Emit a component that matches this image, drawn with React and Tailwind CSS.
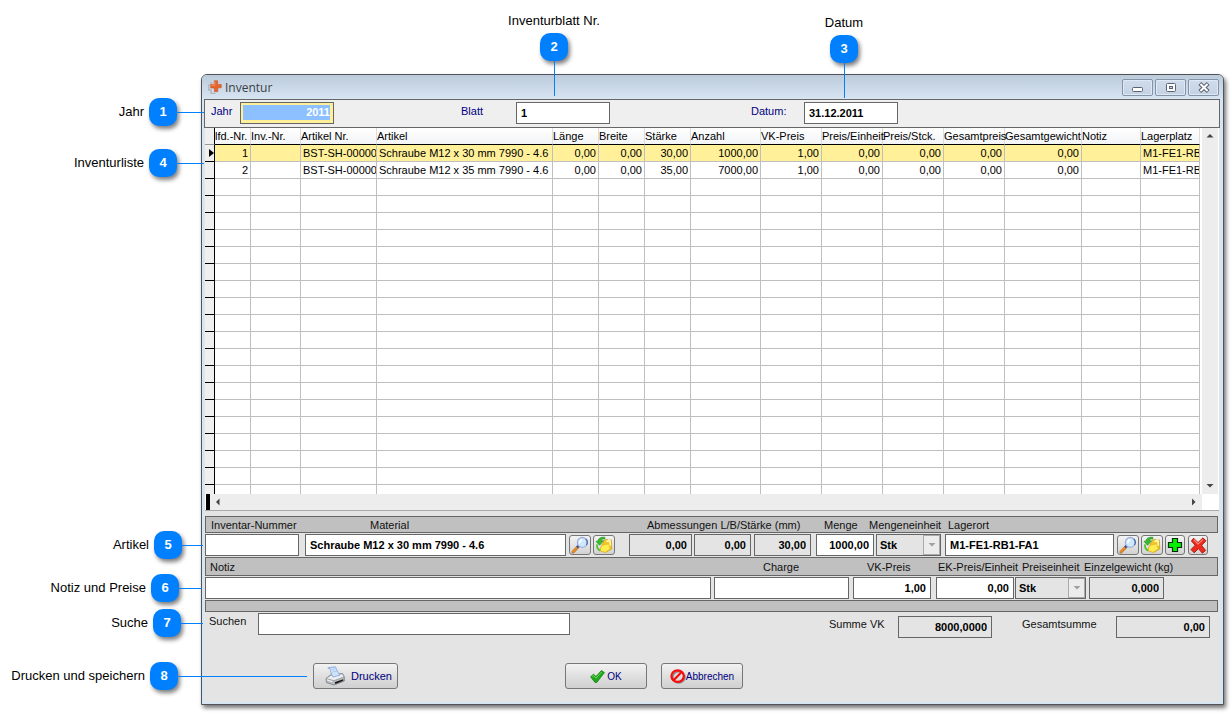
import React from "react";

const FONT = "font-['Liberation_Sans',Arial,sans-serif]";

const COLUMNS = [
  { title: "lfd.-Nr.", width: "w-[36px]", right: true },
  { title: "Inv.-Nr.", width: "w-[50px]" },
  { title: "Artikel Nr.", width: "w-[76px]" },
  { title: "Artikel", width: "w-[176px]" },
  { title: "Länge", width: "w-[46px]", right: true },
  { title: "Breite", width: "w-[46px]", right: true },
  { title: "Stärke", width: "w-[46px]", right: true },
  { title: "Anzahl", width: "w-[70px]", right: true },
  { title: "VK-Preis", width: "w-[61px]", right: true },
  { title: "Preis/Einheit", width: "w-[61px]", right: true },
  { title: "Preis/Stck.", width: "w-[61px]", right: true },
  { title: "Gesamtpreis", width: "w-[61px]", right: true },
  { title: "Gesamtgewicht", width: "w-[77px]", right: true },
  { title: "Notiz", width: "w-[59px]" },
  { title: "Lagerplatz", width: "" },
];

const ROWS = [
  ["1", "", "BST-SH-000002", "Schraube M12 x 30 mm 7990 - 4.6", "0,00", "0,00", "30,00", "1000,00", "1,00", "0,00", "0,00", "0,00", "0,00", "", "M1-FE1-RB1"],
  ["2", "", "BST-SH-000003", "Schraube M12 x 35 mm 7990 - 4.6", "0,00", "0,00", "35,00", "7000,00", "1,00", "0,00", "0,00", "0,00", "0,00", "", "M1-FE1-RB1"],
];

const EMPTY_ROWS = Array.from({ length: 19 }, (_, i) => i);

function AppIcon() {
  return (
    <svg width="14" height="14" viewBox="0 0 14 14" aria-hidden="true">
      <path d="M3 2v3H0.8v5H3v3.4h4.6" fill="none" stroke="#b4b8bd" strokeWidth="1.5" />
      <path d="M6.2 .8h3.4v3.6h3.600v3.400H9.800V11.600H6.400V8H2.800V4.600h3.400z" fill="#e8622c" stroke="#c94f20" strokeWidth="0.6" />
      <path d="M6.800 1.400v3.800H3.400" fill="none" stroke="#f6a27c" strokeWidth="0.8" />
    </svg>
  );
}

function MagnifierIcon() {
  return (
    <svg width="18" height="18" viewBox="0 0 18 18" aria-hidden="true">
      <path d="M2 16l5.6-5.8" stroke="#a8743c" strokeWidth="3" strokeLinecap="round" />
      <path d="M2 15.6l3.4-3.6" stroke="#f08a24" strokeWidth="2.2" strokeLinecap="round" />
      <path d="M6 11.400l1.800-1.800" stroke="#3c4f9a" strokeWidth="2.4" />
      <circle cx="11.3" cy="6.4" r="4.900" fill="#cfe8fb" stroke="#9fb2de" strokeWidth="1.3" />
      <path d="M8.2 6a3.2 3.2 0 0 1 3.6-2.9L8.6 8z" fill="#fff" />
      <path d="M14.8 2.8a5 5 0 0 1 .6 6.2" fill="none" stroke="#4a62ac" strokeWidth="1.2" />
    </svg>
  );
}

function FolderIcon() {
  return (
    <svg width="18" height="18" viewBox="0 0 18 18" aria-hidden="true">
      <path d="M8.500 5.500L9.500 4l3-.6.8 1 3-.6.400 9.200-6.200 3.400L5 14.500z" fill="#f0c62a" stroke="#cf9f18" strokeWidth="0.8" />
      <path d="M6.400 9.400l7.200-1.600 1.800 5-5.400 3.600-4.800-1.800z" fill="#ffec50" stroke="#e0b422" strokeWidth="0.7" />
      <path d="M11.400 5.400l3.600-.8.400 5" fill="none" stroke="#fffab4" strokeWidth="1.6" />
      <path d="M9.800 1.200C5.600.8 3.200 2.400 2.800 5.200L1 5.400l3.600 3.800 3.800-4.400-2.400.200c.4-1.600 1.800-2.400 3.800-2z" fill="#3dbb2e" stroke="#1f8f1f" strokeWidth="0.7" />
      <path d="M2 8.400c-.4 2.800.6 4.800 3 6.200" fill="none" stroke="#55c02e" strokeWidth="1.800" />
    </svg>
  );
}

function PlusIcon() {
  return (
    <svg width="16" height="16" viewBox="0 0 16 16" aria-hidden="true">
      <path d="M5.500 1.500h5v4h4v5h-4v4h-5v-4h-4v-5h4z" fill="#00f000" stroke="#052b05" strokeWidth="1.2" />
    </svg>
  );
}

function DeleteIcon() {
  return (
    <svg width="17" height="17" viewBox="0 0 17 17" aria-hidden="true">
      <path d="M3.600 1.200L8 5.600 13 .8l3 3-4.400 4.600 4 5-3.200 2.800-4-4.600-4.200 4.200L1 12.600l4.200-4.400L1.400 4z" fill="#ee2a1c" stroke="#a81410" strokeWidth="0.9" />
      <path d="M3.800 2.600L8 7l5-4.600" fill="none" stroke="#ff8a7a" strokeWidth="1.100" />
    </svg>
  );
}

function PrinterIcon() {
  return (
    <svg width="20" height="20" viewBox="0 0 20 20" aria-hidden="true">
      <path d="M1 12.500L5.500 9l12-1.500L19.300 11v4L9 19 1.400 16.500z" fill="#b9bcc0" stroke="#6d7074" strokeWidth="0.7" />
      <path d="M1 12.500L6 9.200l11.500-1.400L19 11l-10 3.600z" fill="#eceeef" stroke="#85888c" strokeWidth="0.6" />
      <path d="M2.800 1.800L10.500.8c1 3 2.300 5.600 4.600 8.200L8 11C6.300 8.600 5.600 4.600 4.800 2.600z" fill="#cfe3fb" stroke="#7fa0d8" strokeWidth="0.8" />
      <path d="M6.500 3.500l3.800-.5M7.600 6l4-.8" stroke="#a5c4f2" strokeWidth="0.9" />
      <path d="M9.600 16.200l8.600-3v1.600L10.500 18z" fill="#17181a" />
      <path d="M2 13.800l5.500 2" stroke="#f7f7f7" strokeWidth="1" />
    </svg>
  );
}

function CheckIcon() {
  return (
    <svg width="15" height="13" viewBox="0 0 15 13" aria-hidden="true">
      <path d="M.6 6.800L3.600 4.200 6 6.600 11.400.6l3 2L6.800 12.400H5z" fill="#22a81c" stroke="#0f7d10" strokeWidth="0.8" />
      <path d="M2 6.600l1.600-1 2.400 2.600L11.600 2" fill="none" stroke="#74dc5c" strokeWidth="0.9" />
    </svg>
  );
}

function ForbiddenIcon() {
  return (
    <svg width="16" height="15" viewBox="0 0 16 15" aria-hidden="true">
      <ellipse cx="8.800" cy="8.200" rx="6" ry="5.600" fill="none" stroke="#8a8a8a" strokeWidth="1.800" />
      <ellipse cx="7.600" cy="7.100" rx="6.200" ry="5.800" fill="none" stroke="#fa0a0a" strokeWidth="2.200" />
      <path d="M3.600 11.200L11.600 3" stroke="#fa0a0a" strokeWidth="2.200" />
    </svg>
  );
}

function Arrow({ d, color = "#444" }) {
  return (
    <svg width="8" height="8" viewBox="0 0 8 8" aria-hidden="true">
      <path d={d} fill={color} />
    </svg>
  );
}

const UP = "M0.500 5.500h7L4 2z";
const DOWN = "M0.500 2h7L4 5.500z";
const LEFT = "M5.500 0.500v7L2 4z";
const RIGHT = "M2 0.500v7L5.500 4z";

function Field({ id, className = "", readOnly = false, right = false, ...rest }) {
  return (
    <input
      id={id}
      readOnly={readOnly}
      className={`h-[22px] min-w-0 rounded-none border border-[#666] px-1 text-[11px] font-bold text-black outline-none ${readOnly ? "bg-[#e4e4e4]" : "bg-white"} ${right ? "text-right" : ""} ${className}`}
      {...rest}
    />
  );
}

function UnitSelect({ id, className }) {
  return (
    <div className={`relative ${className}`}>
      <select
        id={id}
        disabled
        defaultValue="Stk"
        className="block h-[22px] w-full appearance-none rounded-none border border-[#666] bg-[#e4e4e4] px-[3px] text-[11px] font-bold text-black opacity-100"
      >
        <option>Stk</option>
      </select>
      <span className="pointer-events-none absolute right-px top-px flex h-5 w-[17px] items-center justify-center border border-[#aaa] bg-[#ececec]">
        <Arrow d={DOWN} color="#a0a0a0" />
      </span>
    </div>
  );
}

function ToolButton({ label, className = "w-[22px]", children }) {
  return (
    <button
      type="button"
      aria-label={label}
      className={`flex h-5 shrink-0 items-center justify-center rounded-[3px] border border-[#777] bg-linear-to-b from-[#f4f4f4] to-[#d2d2d2] ${className}`}
    >
      {children}
    </button>
  );
}

function ActionButton({ className = "", children }) {
  return (
    <button
      type="button"
      className={`flex h-[26px] shrink-0 items-center justify-center rounded-[3px] border border-[#777] bg-linear-to-b from-[#f2f2f2] via-[#e0e0e0] to-[#d0d0d0] text-[#000080] ${className}`}
    >
      {children}
    </button>
  );
}

function CaptionButton({ label, children }) {
  return (
    <button
      type="button"
      aria-label={label}
      className="flex h-[17px] w-[31px] items-center justify-center rounded-[2px] border border-[#8593a8] bg-linear-to-b from-[#d0dceb] to-[#c3d2e3] shadow-[inset_0_0_0_1px_#dfe9f4]"
    >
      <svg width="12" height="11" viewBox="0 0 12 11" aria-hidden="true">
        {children}
      </svg>
    </button>
  );
}

function TitleBar() {
  return (
    <header className="flex h-6 items-start bg-linear-to-b from-[#bccbda] to-[#d7e5f3] pl-1.5">
      <span className="pt-[5px]">
        <AppIcon />
      </span>
      <h1 className="flex-1 pl-[3px] pt-[3px] font-['Open_Sans','Noto_Sans',sans-serif] text-[12px] leading-5 text-[#3a3f46]">
        Inventur
      </h1>
      <div className="flex gap-0.5 pr-1 pt-1">
        <CaptionButton label="Minimieren">
          <rect x="0.500" y="5.500" width="10" height="4" rx="1" fill="#fff" stroke="#5a6170" />
        </CaptionButton>
        <CaptionButton label="Maximieren">
          <rect x="1.500" y="1.500" width="9" height="8" rx="1" fill="#fff" stroke="#5a6170" />
          <rect x="4.500" y="4.500" width="3" height="2" fill="#c8d5e4" stroke="#5a6170" />
        </CaptionButton>
        <CaptionButton label="Schließen">
          <path d="M1.800 1.500l8.400 8M10.200 1.500l-8.400 8" stroke="#5a6170" strokeWidth="4" />
          <path d="M2.400 2.100l7.200 6.800M9.600 2.100L2.400 8.900" stroke="#fff" strokeWidth="2" />
        </CaptionButton>
      </div>
    </header>
  );
}

function SheetBar() {
  return (
    <div className="flex h-[29px] items-start border border-[#666] bg-[#efefef] pl-1.5 pt-0.5 text-[11px] text-[#000080]">
      <label htmlFor="jahr" className="w-[29px] pt-px leading-4">Jahr</label>
      <div className="h-[22px] w-[94px] border border-[#666] bg-[#fff099] px-0.5 pt-0.5">
        <input
          id="jahr"
          defaultValue="2011"
          className="block h-[15px] w-[87px] bg-[#8cc0ff] text-right text-[11px] font-bold text-white outline-none"
        />
      </div>
      <label htmlFor="blatt" className="ml-[127px] w-[55px] pt-px leading-4">Blatt</label>
      <Field id="blatt" defaultValue="1" className="w-[94px]" />
      <label htmlFor="datum" className="ml-[141px] w-[53px] pt-px leading-4">Datum:</label>
      <Field id="datum" defaultValue="31.12.2011" className="w-[94px]" />
    </div>
  );
}

function InventoryTable() {
  return (
    <div className="border-b border-[#aaa] bg-white">
      <div className="flex h-[366px] overflow-hidden">
        <div className="min-w-0 flex-1 overflow-hidden">
          <table className="w-full table-fixed border-separate border-spacing-0 text-[11px] text-black">
            <colgroup>
              <col className="w-[10px]" />
              {COLUMNS.map((c) => (
                <col key={c.title} className={c.width} />
              ))}
            </colgroup>
            <thead>
              <tr className="h-[17px]">
                <td className="border-b border-r border-black border-b-[#999] bg-[#efefef] p-0" />
                {COLUMNS.map((c) => (
                  <th
                    key={c.title}
                    scope="col"
                    className="whitespace-nowrap border-b border-r border-b-black border-r-[#ddd] bg-linear-to-b from-white to-[#f3f4f6] p-0 text-left font-normal leading-4"
                  >
                    <div className="h-4 overflow-visible">{c.title}</div>
                  </th>
                ))}
              </tr>
            </thead>
            <tbody>
              {ROWS.map((row, r) => (
                <tr key={row[0]} className={`h-[17px] ${r === 0 ? "bg-[#fff099]" : "bg-white"}`}>
                  <td className="border-b border-r border-black bg-[#efefef] p-0">
                    <div className="flex h-4 items-center justify-end">
                      {r === 0 && <Arrow d="M3 0l5 4-5 4z" color="#000" />}
                    </div>
                  </td>
                  {row.map((cell, i) => (
                    <td
                      key={COLUMNS[i].title}
                      className={`overflow-hidden whitespace-nowrap border-b border-r border-[#bfbfbf] py-0 leading-4 ${COLUMNS[i].right ? "px-0.5 text-right" : "pl-0.5 pr-0 text-left"}`}
                    >
                      <div className="h-4 overflow-hidden">{cell}</div>
                    </td>
                  ))}
                </tr>
              ))}
              {EMPTY_ROWS.map((n) => (
                <tr key={n} className="h-[17px]">
                  <td className="border-b border-r border-black bg-[#efefef] p-0" />
                  {COLUMNS.map((c) => (
                    <td key={c.title} className="border-b border-r border-[#bfbfbf] p-0" />
                  ))}
                </tr>
              ))}
            </tbody>
          </table>
        </div>
        <div className="ml-0.5 mr-px flex w-4 flex-col items-center justify-between bg-[#ededed] py-1">
          <Arrow d={UP} />
          <Arrow d={DOWN} />
        </div>
      </div>
      <div className="flex h-4 items-stretch pl-px">
        <div className="w-1 bg-black" />
        <div className="mr-[17px] flex flex-1 items-center justify-between bg-[#ededed] px-1">
          <Arrow d={LEFT} />
          <Arrow d={RIGHT} />
        </div>
      </div>
    </div>
  );
}

function ArticleForm() {
  return (
    <div className="flex flex-col gap-px pr-px pt-[5px] text-[11px] text-[#111]">
      <div className="grid h-[17px] grid-cols-[159px_1fr_177px_45px_79px_269px] border border-[#666] bg-[#c0c0c0] pl-[5px] leading-4">
        <label htmlFor="inventarnummer">Inventar-Nummer</label>
        <label htmlFor="material">Material</label>
        <label htmlFor="laenge">Abmessungen L/B/Stärke (mm)</label>
        <label htmlFor="menge">Menge</label>
        <label htmlFor="mengeneinheit">Mengeneinheit</label>
        <label htmlFor="lagerort">Lagerort</label>
      </div>
      <div className="flex items-start pr-2.5">
        <Field id="inventarnummer" className="w-[94px]" />
        <Field id="material" defaultValue="Schraube M12 x 30 mm 7990 - 4.6" className="ml-1.5 flex-1" />
        <div className="ml-[3px] flex gap-0.5 pt-px">
          <ToolButton label="Material suchen"><MagnifierIcon /></ToolButton>
          <ToolButton label="Material öffnen"><FolderIcon /></ToolButton>
        </div>
        <Field id="laenge" readOnly right defaultValue="0,00" className="ml-3.5 w-[63px]" />
        <Field aria-label="Breite" readOnly right defaultValue="0,00" className="ml-0.5 w-[57px]" />
        <Field aria-label="Stärke" readOnly right defaultValue="30,00" className="ml-[3px] w-[57px]" />
        <Field id="menge" right defaultValue="1000,00" className="ml-[5px] w-[58px]" />
        <UnitSelect id="mengeneinheit" className="ml-0.5 w-[65px]" />
        <Field id="lagerort" defaultValue="M1-FE1-RB1-FA1" className="ml-1 w-[169px]" />
        <div className="ml-[3px] flex gap-0.5 pt-px">
          <ToolButton label="Lagerort suchen"><MagnifierIcon /></ToolButton>
          <ToolButton label="Lagerort öffnen"><FolderIcon /></ToolButton>
        </div>
        <div className="ml-0.5 flex gap-[3px] pt-px">
          <ToolButton label="Hinzufügen" className="w-5"><PlusIcon /></ToolButton>
          <ToolButton label="Löschen" className="w-5"><DeleteIcon /></ToolButton>
        </div>
      </div>
      <div className="grid h-[19px] grid-cols-[1fr_104px_71px_84px_62px_133px] border border-[#666] bg-[#c0c0c0] pl-1 leading-[18px]">
        <label htmlFor="notiz">Notiz</label>
        <label htmlFor="charge">Charge</label>
        <label htmlFor="vkpreis">VK-Preis</label>
        <label htmlFor="ekpreis" className="whitespace-nowrap">EK-Preis/Einheit</label>
        <label htmlFor="preiseinheit">Preiseinheit</label>
        <label htmlFor="einzelgewicht">Einzelgewicht (kg)</label>
      </div>
      <div className="flex pr-[54px]">
        <Field id="notiz" className="flex-1" />
        <Field id="charge" className="ml-[3px] w-[135px]" />
        <Field id="vkpreis" right defaultValue="1,00" className="ml-1 w-[78px]" />
        <Field id="ekpreis" right defaultValue="0,00" className="ml-[5px] w-[78px]" />
        <UnitSelect id="preiseinheit" className="ml-px w-[71px]" />
        <Field id="einzelgewicht" readOnly right defaultValue="0,000" className="ml-[3px] w-[75px]" />
      </div>
      <div className="h-3 border border-[#666] bg-[#c0c0c0]" />
    </div>
  );
}

function SearchAndTotals() {
  return (
    <div className="flex items-start pl-1 pr-[9px] pt-px text-[11px] text-[#111]">
      <label htmlFor="suchen" className="w-[49px] leading-4">Suchen</label>
      <Field id="suchen" className="w-[312px]" />
      <div className="ml-auto flex items-start pt-[3px]">
        <label htmlFor="summevk" className="w-[69px] leading-4">Summe VK</label>
        <Field id="summevk" readOnly right defaultValue="8000,0000" className="w-[94px]" />
        <label htmlFor="gesamtsumme" className="ml-[30px] w-[94px] leading-4">Gesamtsumme</label>
        <Field id="gesamtsumme" readOnly right defaultValue="0,00" className="w-[94px]" />
      </div>
    </div>
  );
}

const BADGE =
  "flex size-7 shrink-0 items-center justify-center rounded-[10px] bg-[#0080ff] text-[13px] font-bold text-white shadow-[2px_3px_4px_rgba(0,0,0,0.5)]";

function SideNote({ number, text, place, line }) {
  return (
    <div className={`absolute left-0 flex items-center ${place}`}>
      <span className="flex-1 whitespace-nowrap pr-[5px] text-right text-[13px]">{text}</span>
      <span className={BADGE}>{number}</span>
      <span className={`h-px bg-[#0080ff] ${line}`} />
    </div>
  );
}

function TopNote({ number, text, place }) {
  return (
    <div className={`absolute flex w-[100px] flex-col items-center ${place}`}>
      <span className="mb-1 whitespace-nowrap text-[13px] leading-4">{text}</span>
      <span className={BADGE}>{number}</span>
      <span className="h-[35px] w-px bg-[#0080ff]" />
    </div>
  );
}

export default function App() {
  return (
    <div className={`relative min-h-screen bg-white pb-2 pl-[201px] pr-2 pt-[74px] text-black ${FONT}`}>
      <main className="min-w-[1000px] rounded-t-[6px] border border-[#50545a] bg-[#d7e5f3] pb-0.5 shadow-[2px_3px_4px_rgba(0,0,0,0.55)]">
        <div className="overflow-hidden rounded-t-[5px]">
          <TitleBar />
        </div>
        <div className="ml-0.5 mr-[3px] bg-[#e4e4e4]">
          <SheetBar />
          <div className="px-px">
            <InventoryTable />
            <ArticleForm />
            <SearchAndTotals />
            <div className="flex pb-[13px] pl-[108px] pt-[25px]">
              <ActionButton className="w-[85px] gap-1.5 pl-1.5 text-[11px]">
                <PrinterIcon />
                Drucken
              </ActionButton>
              <ActionButton className="ml-[167px] w-[82px] gap-0.5 text-[10px]">
                <CheckIcon />
                OK
              </ActionButton>
              <ActionButton className="ml-3.5 w-[82px] text-[10px]">
                <ForbiddenIcon />
                Abbrechen
              </ActionButton>
            </div>
          </div>
        </div>
      </main>

      <SideNote number="1" text="Jahr" place="top-[98px] w-[204px]" line="w-[27px]" />
      <TopNote number="2" text="Inventurblatt Nr." place="left-[504px] top-[13px]" />
      <TopNote number="3" text="Datum" place="left-[794px] top-[15px]" />
      <SideNote number="4" text="Inventurliste" place="top-[149px] w-[204px]" line="w-[27px]" />
      <SideNote number="5" text="Artikel" place="top-[531px] w-[203px]" line="w-[21px]" />
      <SideNote number="6" text="Notiz und Preise" place="top-[574px] w-[202px]" line="w-[23px]" />
      <SideNote number="7" text="Suche" place="top-[609px] w-[203px]" line="w-[22px]" />
      <SideNote number="8" text="Drucken und speichern" place="top-[662px] w-[307px]" line="w-[129px]" />
    </div>
  );
}
